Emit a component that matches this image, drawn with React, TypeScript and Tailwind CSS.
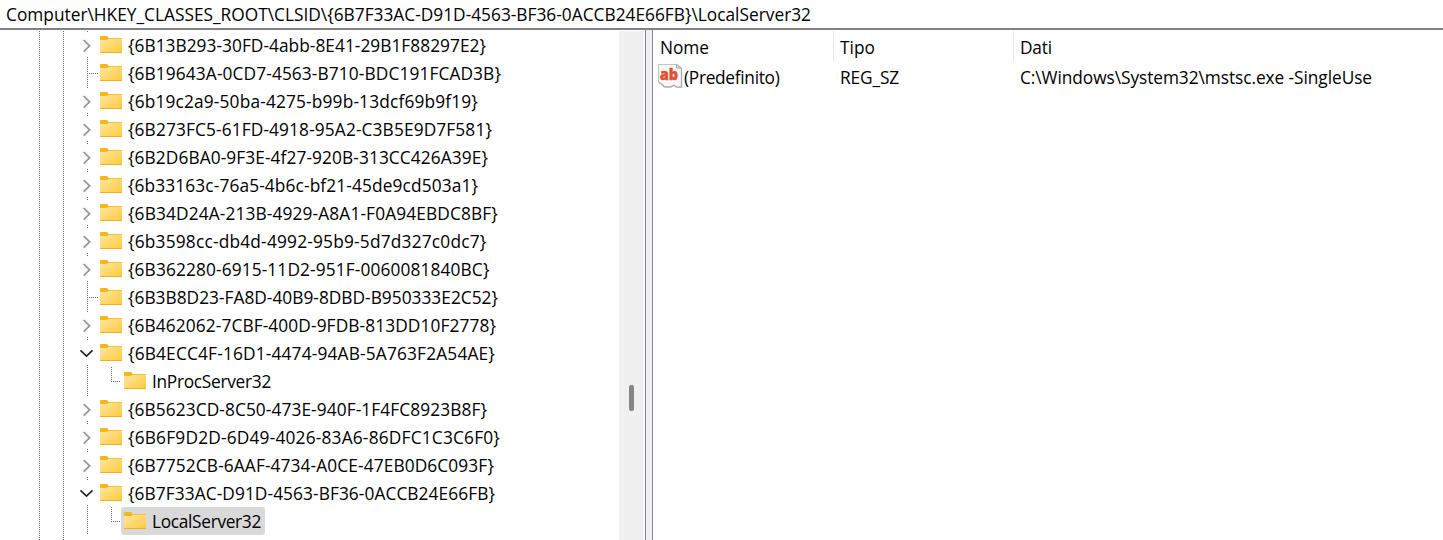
import { useLayoutEffect, useRef, useState } from "react";

type Kind = "closed" | "leaf" | "open" | "child";
const rows: { t: string; k: Kind; w: number; selected?: boolean }[] = [
  { t: "{6B13B293-30FD-4abb-8E41-29B1F88297E2}", k: "closed", w: 358 },
  { t: "{6B19643A-0CD7-4563-B710-BDC191FCAD3B}", k: "leaf", w: 373 },
  { t: "{6b19c2a9-50ba-4275-b99b-13dcf69b9f19}", k: "closed", w: 350 },
  { t: "{6B273FC5-61FD-4918-95A2-C3B5E9D7F581}", k: "closed", w: 364 },
  { t: "{6B2D6BA0-9F3E-4f27-920B-313CC426A39E}", k: "closed", w: 360 },
  { t: "{6b33163c-76a5-4b6c-bf21-45de9cd503a1}", k: "closed", w: 350 },
  { t: "{6B34D24A-213B-4929-A8A1-F0A94EBDC8BF}", k: "closed", w: 370 },
  { t: "{6b3598cc-db4d-4992-95b9-5d7d327c0dc7}", k: "closed", w: 358.5 },
  { t: "{6B362280-6915-11D2-951F-0060081840BC}", k: "closed", w: 361.5 },
  { t: "{6B3B8D23-FA8D-40B9-8DBD-B950333E2C52}", k: "leaf", w: 370 },
  { t: "{6B462062-7CBF-400D-9FDB-813DD10F2778}", k: "closed", w: 368 },
  { t: "{6B4ECC4F-16D1-4474-94AB-5A763F2A54AE}", k: "open", w: 367 },
  { t: "InProcServer32", k: "child", w: 119 },
  { t: "{6B5623CD-8C50-473E-940F-1F4FC8923B8F}", k: "closed", w: 359 },
  { t: "{6B6F9D2D-6D49-4026-83A6-86DFC1C3C6F0}", k: "closed", w: 372 },
  { t: "{6B7752CB-6AAF-4734-A0CE-47EB0D6C093F}", k: "closed", w: 366 },
  { t: "{6B7F33AC-D91D-4563-BF36-0ACCB24E66FB}", k: "open", w: 367 },
  { t: "LocalServer32", k: "child", w: 109, selected: true },
];

/* Single-line label whose tracking is adjusted to fill the given width. */
function Label({ text, width }: { text: string; width: number }) {
  const ref = useRef<HTMLSpanElement>(null);
  const [spacing, setSpacing] = useState(0);
  useLayoutEffect(() => {
    const el = ref.current;
    if (!el) return;
    el.style.letterSpacing = "0px";
    setSpacing((width - el.getBoundingClientRect().width) / text.length);
  }, [text, width]);
  return (
    <span ref={ref} className="inline-block shrink-0 whitespace-pre" style={{ letterSpacing: `${spacing}px` }}>
      {text}
    </span>
  );
}

function VLine({ className = "" }: { className?: string }) {
  return <div className={`w-px bg-[repeating-linear-gradient(to_bottom,#666_0_1px,transparent_1px_2px)] ${className}`} />;
}

function Folder() {
  return (
    <svg width="22" height="18" viewBox="0 0 22 18" className="shrink-0">
      <defs>
        <linearGradient id="fold" x1="0" y1="0" x2="1" y2="1">
          <stop offset="0" stopColor="#ffe7a2" />
          <stop offset="1" stopColor="#ffca3a" />
        </linearGradient>
      </defs>
      <path d="M0 1Q0 0 1 0H6.5Q8 0 8.3 2H21Q22 2 22 3V5H0Z" fill="#f9b616" />
      <path d="M0 4H7L8.5 2.8H22V17H0Z" fill="url(#fold)" />
      <path d="M0 16.5H22" stroke="#eeb02c" />
    </svg>
  );
}

function Gutter({ kind }: { kind: Kind }) {
  if (kind === "closed" || kind === "open")
    return (
      <div className="flex h-7 w-[21px] shrink-0 flex-col">
        <VLine className="ml-2 h-px" />
        <svg width="16" height="25" viewBox="0 0 16 25" fill="none" strokeWidth="1.7">
          {kind === "closed" ? <path d="M4.6 8L10.6 13.8L4.6 19.6" stroke="#949494" /> : <path d="M1.5 10.3L7.5 16L13.5 10.3" stroke="#222" />}
        </svg>
        <VLine className="ml-2 h-[2px]" />
      </div>
    );
  return (
    <div className="flex h-7 w-[21px] shrink-0 pl-2">
      <VLine className="h-7" />
      {kind === "leaf" && (
        <div className="mt-[14px] ml-px h-px w-[9px] bg-[repeating-linear-gradient(to_right,#666_0_1px,transparent_1px_2px)]" />
      )}
    </div>
  );
}

export default function App() {
  return (
    <div className="flex h-[540px] w-[1443px] flex-col overflow-hidden bg-white font-['Open_Sans','Noto_Sans',sans-serif] text-[17.3px] leading-7 text-black">
      <div className="flex h-[28px] shrink-0 items-center pt-px pl-[6px]">
        <Label text="Computer\HKEY_CLASSES_ROOT\CLSID\{6B7F33AC-D91D-4563-BF36-0ACCB24E66FB}\LocalServer32" width={805} />
      </div>
      <div className="h-[2px] shrink-0 bg-[#828087]" />
      <div className="flex min-h-0 flex-1">
        <div className="flex w-[619px] overflow-hidden pt-px">
          <VLine className="ml-[39px]" />
          <VLine className="ml-[23px]" />
          <div className="ml-[15px] flex-1">
            {rows.map((r) => (
              <div key={r.t} className="flex h-7 items-center">
                <Gutter kind={r.k} />
                {r.k === "child" ? (
                  <>
                    <div className="flex h-7 w-[21px] shrink-0 pl-[11px]">
                      <VLine className="h-[15px]" />
                      <div className="mt-[14px] ml-px h-px w-[9px] bg-[repeating-linear-gradient(to_right,#666_0_1px,transparent_1px_2px)]" />
                    </div>
                    <div className={`flex h-7 w-36 items-center gap-[6px] rounded-[3px] pl-[3px] ${r.selected ? "bg-[#d9d9d9]" : ""}`}>
                      <Folder />
                      <div className="flex pt-[2px]">
                        <Label text={r.t} width={r.w} />
                      </div>
                    </div>
                  </>
                ) : (
                  <div className="flex items-center gap-[6px]">
                    <Folder />
                    <div className="flex pt-[2px]">
                      <Label text={r.t} width={r.w} />
                    </div>
                  </div>
                )}
              </div>
            ))}
          </div>
        </div>
        <div className="mt-px w-[25px] bg-[#f0f0f0] pt-[354px] pl-[10px]">
          <div className="h-[26px] w-[5px] rounded-[2px] bg-[#868686]" />
        </div>
        <div className="ml-px w-[8px] border-x border-[#828790] bg-[#f0f0f0]" />
        <div className="flex-1 pt-px">
          <div className="flex h-[30px]">
            <div className="flex w-[181px] items-center border-r border-[#e5e5e5] pt-1 pl-[7px]">
              <Label text="Nome" width={49} />
            </div>
            <div className="flex w-[180px] items-center border-r border-[#e5e5e5] pt-1 pl-[6px]">
              <Label text="Tipo" width={35} />
            </div>
            <div className="flex items-center pt-1 pl-[6px]">
              <Label text="Dati" width={32} />
            </div>
          </div>
          <div className="flex h-[34px] items-center">
            <div className="flex w-[187px] items-center pl-[5px]">
              <svg width="24" height="28" viewBox="0 0 24 28" className="mr-[2px] shrink-0 overflow-visible">
                <path d="M.5 .5H18.5L23.5 4V23.5H19L16 21.5L13 23H6L4 20.5L.5 18Z" fill="#f6f6f6" stroke="#c4c4c4" />
                <path d="M18.5 .5V4H23.5Z" fill="#e2e2e2" stroke="#999" strokeWidth=".8" />
                <path d="M.5 18L4 20.5L6 22.8H13L16 21.2L19 23.2H23.5V5" fill="none" stroke="#adadad" strokeWidth="1.3" />
                <text x="1.8" y="16" fontFamily="Open Sans" fontWeight="800" fontSize="15.5" textLength="18.4" lengthAdjust="spacingAndGlyphs" fill="#de5430" stroke="#de5430" strokeWidth=".4">ab</text>
              </svg>
              <Label text="(Predefinito)" width={95.5} />
            </div>
            <div className="w-[180px]">
              <Label text="REG_SZ" width={59} />
            </div>
            <Label text="C:\Windows\System32\mstsc.exe -SingleUse" width={352} />
          </div>
        </div>
      </div>
    </div>
  );
}
